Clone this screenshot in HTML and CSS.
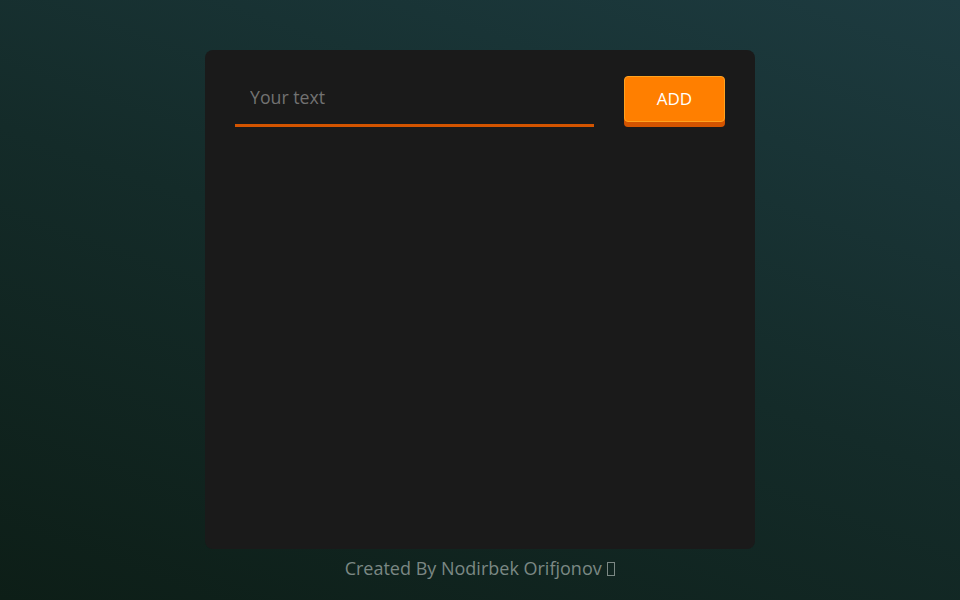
FILE: index.html
```html
<!DOCTYPE html>
<html lang="en">
<head>
<meta charset="utf-8">
<title>Todo</title>
<link rel="stylesheet" href="styles.css">
</head>
<body>
<main class="page">
  <section class="card">
    <form class="row">
      <input class="field" type="text" placeholder="Your text">
      <button class="add" type="button">ADD</button>
    </form>
    <ul class="list"></ul>
  </section>
  <footer class="credit">Created By Nodirbek Orifjonov <span class="tofu"></span></footer>
</main>
</body>
</html>
```
FILE: styles.css
```css
* { box-sizing: border-box; }
html, body { margin: 0; height: 100%; }
body {
  font-family: "Open Sans", "Noto Sans", sans-serif;
  background: linear-gradient(20deg, #0d1e17 0%, #142b29 50%, #1d3b40 100%);
  color: #fff;
}
.page {
  height: 600px;
  display: flex;
  flex-direction: column;
  align-items: center;
  padding-top: 50px;
}
.card {
  width: 550px;
  height: 499px;
  background: #1a1a1a;
  border-radius: 8px;
  padding: 26px 30px 30px;
}
.row {
  display: flex;
  align-items: flex-start;
  gap: 30px;
  margin: 0;
}
.field {
  flex: 1;
  height: 51px;
  background: transparent;
  border: none;
  border-bottom: 3px solid #d35400;
  padding: 0 15px 7px;
  font-family: inherit;
  font-size: 17.7px;
  color: #ddd;
  outline: none;
}
.field::placeholder { color: #727272; }
.add {
  width: 101px;
  height: 46px;
  background: #ff7f00;
  border: 1px solid #ffa21f;
  border-radius: 4px;
  box-shadow: 0 5px 0 #d35400;
  color: #fff;
  font-family: inherit;
  font-size: 17px;
  padding: 0 0 2px;
}
.list { margin: 0; padding: 0; list-style: none; }
.credit {
  margin-top: 7px;
  font-size: 18px;
  color: #7b8884;
}
.tofu {
  display: inline-block;
  width: 8px;
  height: 14px;
  border: 1px solid #7b8884;
  vertical-align: -1px;
  margin-left: 1px;
}
```
